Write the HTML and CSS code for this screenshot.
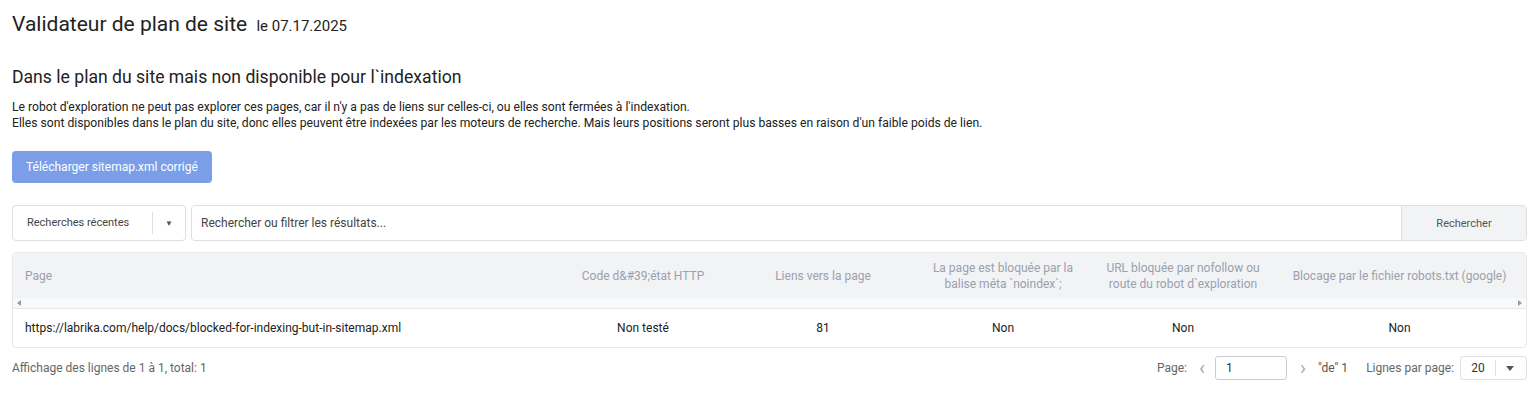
FILE: index.html
```html
<!DOCTYPE html>
<html lang="fr">
<head>
    <meta charset="UTF-8">
    <title>Validateur de plan de site</title>
    <link rel="stylesheet" href="styles.css">
</head>
<body>
    <div class="page">
        <h1 class="title">Validateur de plan de site <span class="date">le 07.17.2025</span></h1>

        <h2 class="subtitle">Dans le plan du site mais non disponible pour l`indexation</h2>
        <p class="desc">
            Le robot d'exploration ne peut pas explorer ces pages, car il n'y a pas de liens sur celles-ci, ou elles sont fermées à l'indexation.<br>
            Elles sont disponibles dans le plan du site, donc elles peuvent être indexées par les moteurs de recherche. Mais leurs positions seront plus basses en raison d'un faible poids de lien.
        </p>

        <button class="btn-primary">Télécharger sitemap.xml corrigé</button>

        <div class="search-row">
            <div class="recent">
                <span class="recent-label">Recherches récentes</span>
                <span class="recent-caret">▼</span>
            </div>
            <div class="search-box">
                <input class="search-input" placeholder="Rechercher ou filtrer les résultats...">
                <button class="search-btn">Rechercher</button>
            </div>
        </div>

        <div class="table-wrap">
            <table class="results">
                <colgroup>
                    <col class="c-page">
                    <col class="c-mid">
                    <col class="c-mid">
                    <col class="c-mid">
                    <col class="c-mid">
                    <col>
                </colgroup>
                <thead>
                    <tr>
                        <th class="left">Page</th>
                        <th>Code d&amp;#39;état HTTP</th>
                        <th>Liens vers la page</th>
                        <th>La page est bloquée par la balise méta `noindex`;</th>
                        <th>URL bloquée par nofollow ou route du robot d`exploration</th>
                        <th>Blocage par le fichier robots.txt (google)</th>
                    </tr>
                </thead>
            </table>
            <div class="scrollbar">
                <span class="arrow-left"></span>
                <span class="arrow-right"></span>
            </div>
            <table class="results">
                <colgroup>
                    <col class="c-page">
                    <col class="c-mid">
                    <col class="c-mid">
                    <col class="c-mid">
                    <col class="c-mid">
                    <col>
                </colgroup>
                <tbody>
                    <tr>
                        <td class="left">https://labrika.com/help/docs/blocked-for-indexing-but-in-sitemap.xml</td>
                        <td>Non testé</td>
                        <td>81</td>
                        <td>Non</td>
                        <td>Non</td>
                        <td>Non</td>
                    </tr>
                </tbody>
            </table>
        </div>

        <div class="footer">
            <span class="summary">Affichage des lignes de 1 à 1, total: 1</span>
            <div class="pager">
                <span class="pager-label">Page:</span>
                <span class="chev">&lsaquo;</span>
                <input class="page-input" value="1">
                <span class="chev">&rsaquo;</span>
                <span class="of">"de" 1</span>
                <span class="pager-label rows">Lignes par page:</span>
                <div class="per-page">
                    <span class="per-value">20</span>
                    <span class="per-caret"></span>
                </div>
            </div>
        </div>
    </div>
</body>
</html>
```

FILE: styles.css
```css
body {
    margin: 0;
    font-family: Roboto, "Noto Sans", sans-serif;
    color: #333;
    background: #fff;
}
.page {
    padding: 0 10px 0 12px;
}
.title {
    margin: 0;
    padding-top: 11px;
    font-size: 21px;
    font-weight: 400;
    line-height: 26px;
    color: #222;
}
.date {
    font-size: 15px;
    margin-left: 4px;
}
.subtitle {
    margin: 27px 0 0;
    font-size: 17.6px;
    font-weight: 400;
    line-height: 22px;
    color: #222;
}
.desc {
    margin: 11px 0 0;
    font-size: 12.15px;
    line-height: 16px;
    color: #222;
}
.btn-primary {
    margin-top: 20px;
    height: 32px;
    padding: 0 14px;
    border: none;
    border-radius: 4px;
    background: #7b9ee8;
    color: #fff;
    font-family: inherit;
    font-size: 12px;
}
.search-row {
    display: flex;
    gap: 5px;
    margin-top: 22px;
    height: 36px;
}
.recent {
    width: 174px;
    display: flex;
    align-items: center;
    border: 1px solid #dcdfe4;
    border-radius: 4px;
    box-sizing: border-box;
    font-size: 11px;
    color: #444;
}
.recent-label {
    flex: 1;
    padding-left: 14px;
    border-right: 1px solid #dcdfe4;
    line-height: 22px;
}
.recent-caret {
    width: 32px;
    text-align: center;
    font-size: 8px;
    color: #555;
}
.search-box {
    flex: 1;
    display: flex;
    border: 1px solid #dcdfe4;
    border-radius: 4px;
    overflow: hidden;
}
.search-input {
    flex: 1;
    border: none;
    padding: 0 9px;
    font-family: inherit;
    font-size: 12px;
    color: #333;
    outline: none;
}
.search-input::placeholder {
    color: #444;
}
.search-btn {
    width: 125px;
    border: none;
    border-left: 1px solid #dcdfe4;
    background: #f2f3f5;
    font-family: inherit;
    font-size: 11px;
    color: #555;
}
.table-wrap {
    margin-top: 11px;
    border: 1px solid #e6e8ec;
    border-radius: 4px;
    overflow: hidden;
}
.results {
    width: 100%;
    table-layout: fixed;
    border-collapse: collapse;
    font-size: 12px;
}
.c-page {
    width: 540px;
}
.c-mid {
    width: 180px;
}
.results th {
    height: 45px;
    padding: 0 12px;
    background: #f2f3f5;
    color: #9aa1ad;
    font-weight: 400;
    line-height: 16px;
    text-align: center;
}
.results td {
    height: 38px;
    padding: 0 12px;
    text-align: center;
    color: #222;
    border-top: 1px solid #e6e8f0;
}
.results .left {
    text-align: left;
}
.scrollbar {
    display: flex;
    justify-content: space-between;
    align-items: center;
    height: 10px;
    padding: 0 4px;
    background: #f8f9fb;
}
.arrow-left,
.arrow-right {
    width: 0;
    height: 0;
    border-top: 3px solid transparent;
    border-bottom: 3px solid transparent;
}
.arrow-left {
    border-right: 4px solid #9a9a9a;
}
.arrow-right {
    border-left: 4px solid #9a9a9a;
}
.footer {
    display: flex;
    justify-content: space-between;
    align-items: center;
    margin-top: 7px;
    height: 26px;
    font-size: 12px;
    color: #666;
}
.pager {
    display: flex;
    align-items: center;
}
.pager-label {
    color: #666;
}
.chev {
    margin: 0 10px 0 12px;
    font-size: 20px;
    color: #aaa;
    line-height: 18px;
}
.pager .chev + .page-input + .chev {
    margin: 0 12px 0 13px;
}
.page-input {
    width: 72px;
    height: 24px;
    box-sizing: border-box;
    border: 1px solid #c9ced6;
    border-radius: 3px;
    padding: 0 10px;
    font-family: inherit;
    font-size: 12px;
    color: #333;
}
.of {
    color: #555;
}
.rows {
    margin-left: 18px;
}
.per-page {
    display: flex;
    align-items: center;
    margin-left: 6px;
    width: 67px;
    height: 24px;
    box-sizing: border-box;
    border: 1px solid #dcdfe4;
    border-radius: 3px;
}
.per-value {
    width: 34px;
    text-align: center;
    border-right: 1px solid #dcdfe4;
    color: #333;
    line-height: 16px;
}
.per-caret {
    margin-left: 10px;
    width: 0;
    height: 0;
    border-left: 4px solid transparent;
    border-right: 4px solid transparent;
    border-top: 5px solid #555;
}
```
